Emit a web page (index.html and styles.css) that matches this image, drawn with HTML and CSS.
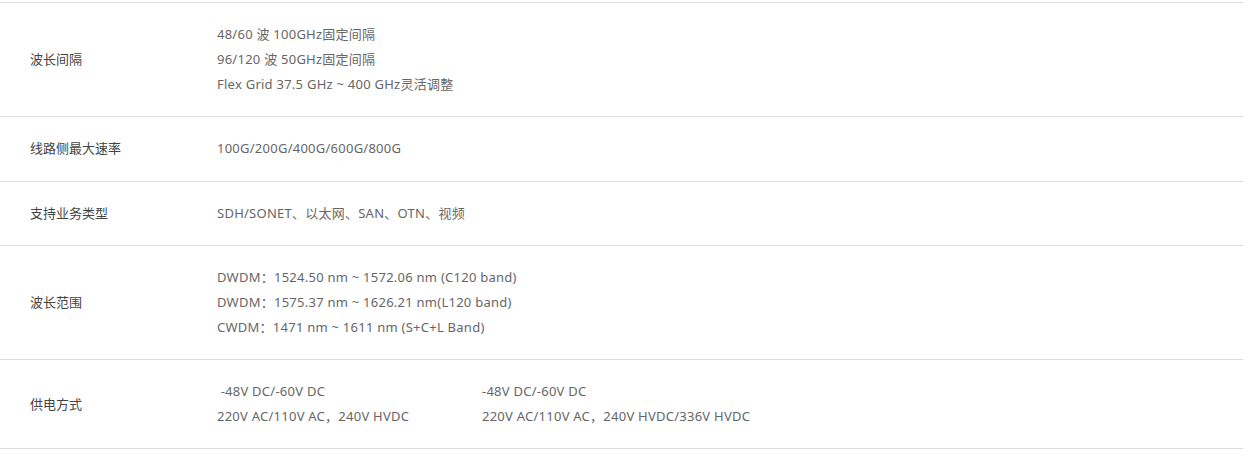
FILE: index.html
```html
<!DOCTYPE html>
<html lang="zh-CN">
<head>
  <meta charset="UTF-8">
  <title>规格参数</title>
  <link rel="stylesheet" href="styles.css">
</head>
<body>

  <div class="spec-table">
    <div class="spec-row">
      <div class="spec-label">波长间隔</div>
      <div class="spec-value">
        <p>48/60 波 100GHz固定间隔</p>
        <p>96/120 波 50GHz固定间隔</p>
        <p>Flex Grid 37.5 GHz ~ 400 GHz灵活调整</p>
      </div>
    </div>

    <div class="spec-row">
      <div class="spec-label">线路侧最大速率</div>
      <div class="spec-value">
        <p>100G/200G/400G/600G/800G</p>
      </div>
    </div>

    <div class="spec-row">
      <div class="spec-label">支持业务类型</div>
      <div class="spec-value">
        <p>SDH/SONET、以太网、SAN、OTN、视频</p>
      </div>
    </div>

    <div class="spec-row">
      <div class="spec-label">波长范围</div>
      <div class="spec-value">
        <p>DWDM：1524.50 nm ~ 1572.06 nm (C120 band)</p>
        <p>DWDM：1575.37 nm ~ 1626.21 nm(L120 band)</p>
        <p>CWDM：1471 nm ~ 1611 nm (S+C+L Band)</p>
      </div>
    </div>

    <div class="spec-row">
      <div class="spec-label">供电方式</div>
      <div class="spec-value spec-split">
        <div class="spec-col">
          <p>&nbsp;-48V DC/-60V DC</p>
          <p>220V AC/110V AC，240V HVDC</p>
        </div>
        <div class="spec-col">
          <p>-48V DC/-60V DC</p>
          <p>220V AC/110V AC，240V HVDC/336V HVDC</p>
        </div>
      </div>
    </div>
  </div>

</body>
</html>
```

FILE: styles.css
```css
* {
  margin: 0;
  padding: 0;
  box-sizing: border-box;
}

body {
  font-family: "Noto Sans", "Noto Sans CJK SC", sans-serif;
  font-size: 13px;
  color: #666;
  background: #fff;
  padding-top: 2px;
}

.spec-table {
  width: 1243px;
  border-top: 1px solid #ddd;
}

.spec-row {
  display: grid;
  grid-template-columns: 217px 1fr;
  align-items: center;
  padding: 19px 0 19.25px;
  border-bottom: 1px solid #ddd;
}

.spec-label {
  padding-left: 30px;
  color: #444;
  line-height: 25px;
}

.spec-value p {
  line-height: 25px;
  letter-spacing: 0.25px;
  white-space: nowrap;
}

.spec-split {
  display: grid;
  grid-template-columns: 265px 1fr;
}
```
